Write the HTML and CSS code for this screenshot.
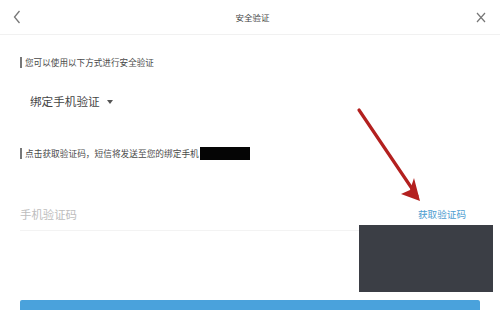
FILE: index.html
```html
<!DOCTYPE html>
<html>
<head>
<meta charset="utf-8">
<link rel="stylesheet" href="styles.css">
</head>
<body>
<div class="page">
  <div class="header">
    <svg class="back" width="8" height="14" viewBox="0 0 8 14"><path d="M6.5 1 L1.5 7 L6.5 13" fill="none" stroke="#777" stroke-width="1.3"/></svg>
    <div class="title">安全验证</div>
    <svg class="close" width="10" height="11" viewBox="0 0 10 11"><path d="M1 1 L9 10 M9 1 L1 10" fill="none" stroke="#777" stroke-width="1.2"/></svg>
  </div>
  <div class="label l1"><span class="bar"></span>您可以使用以下方式进行安全验证</div>
  <div class="select">绑定手机验证<span class="caret"></span></div>
  <div class="label l2"><span class="bar"></span>点击获取验证码，短信将发送至您的绑定手机<span class="mask"></span></div>
  <div class="inputrow">
    <span class="ph">手机验证码</span>
    <span class="get">获取验证码</span>
  </div>
  <div class="btn"></div>
  <div class="darkbox"></div>
  <svg class="arrow" width="500" height="310" viewBox="0 0 500 310">
    <path d="M359 110 L417 196" stroke="#b3201f" stroke-width="3.2" stroke-linecap="round" fill="none"/>
    <path d="M420 201 L401 194 L410 190 L414 178 Z" fill="#b3201f"/>
  </svg>
</div>
</body>
</html>
```
FILE: styles.css
```css
html, body {
  margin: 0;
  padding: 0;
  background: #fff;
}
.page {
  position: relative;
  width: 500px;
  height: 310px;
  overflow: hidden;
  font-family: "Noto Sans CJK SC", "Noto Sans", sans-serif;
  background: #fff;
}
.header {
  height: 34px;
  display: flex;
  align-items: center;
  justify-content: space-between;
  padding: 0 13px 0 13px;
  border-bottom: 1px solid #f1f1f1;
}
.title {
  font-size: 8.5px;
  color: #444;
  margin-left: 8px;
}
.close {
  margin-right: 1px;
}
.label {
  display: flex;
  align-items: center;
  font-size: 8.6px;
  color: #4a4a4a;
  padding-left: 20px;
  height: 14px;
}
.bar {
  display: inline-block;
  width: 2px;
  height: 11px;
  background: #777;
  margin-right: 3px;
}
.l1 {
  margin-top: 20px;
}
.select {
  display: flex;
  align-items: center;
  height: 20px;
  margin-top: 22px;
  padding-left: 30px;
  font-size: 11.6px;
  color: #444;
}
.caret {
  width: 0;
  height: 0;
  border-left: 3px solid transparent;
  border-right: 3px solid transparent;
  border-top: 4px solid #555;
  margin-left: 7px;
  margin-top: 1px;
}
.l2 {
  margin-top: 35px;
  font-size: 8.7px;
}
.mask {
  display: inline-block;
  width: 50px;
  height: 13px;
  background: #050505;
  margin-left: 1px;
}
.inputrow {
  display: flex;
  align-items: center;
  justify-content: space-between;
  margin: 38px 20px 0 20px;
  height: 32px;
  border-bottom: 1px solid #f3f3f3;
}
.ph {
  font-size: 11.4px;
  color: #bdbdbd;
}
.get {
  font-size: 9.6px;
  color: #4d9dd0;
  margin-right: 14px;
}
.btn {
  margin: 69px 20px 0 20px;
  height: 24px;
  background: #4aa2dc;
  border-radius: 2px 2px 0 0;
}
.darkbox {
  position: absolute;
  left: 359px;
  top: 225px;
  width: 134px;
  height: 67px;
  background: #3b3e45;
}
.arrow {
  position: absolute;
  left: 0;
  top: 0;
  pointer-events: none;
}
```
